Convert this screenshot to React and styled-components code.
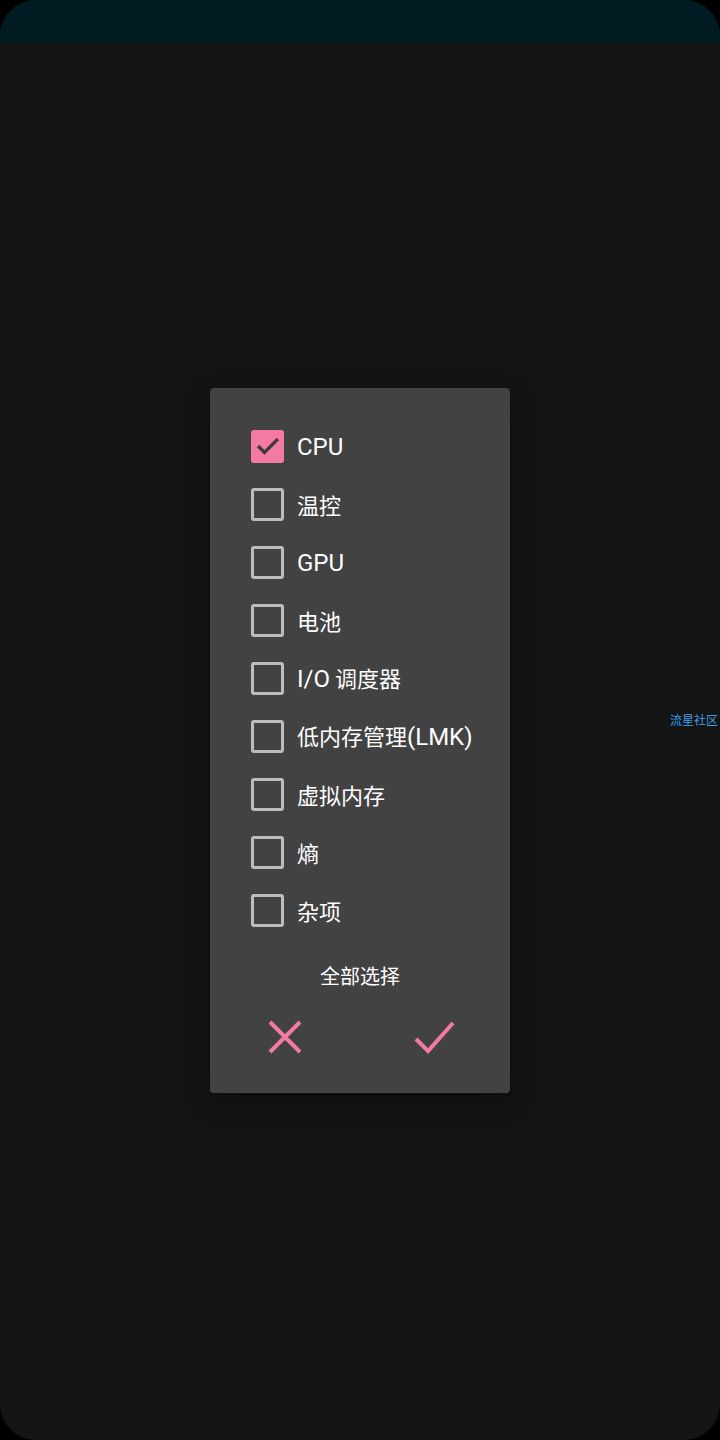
import React from "react";
import styled, { createGlobalStyle } from "styled-components";

const Global = createGlobalStyle`
  html, body {
    margin: 0;
    padding: 0;
    background: #000;
  }
  body {
    font-family: Roboto, "Noto Sans CJK SC", sans-serif;
  }
`;

const Screen = styled.div`
  width: 720px;
  height: 1440px;
  border-radius: 36px;
  overflow: hidden;
  background: #141414;
  display: flex;
  flex-direction: column;
  position: relative;
`;

const StatusBar = styled.div`
  height: 43px;
  background: #011b22;
  flex-shrink: 0;
`;

const Body = styled.div`
  flex: 1;
  display: flex;
  align-items: flex-start;
  justify-content: center;
  padding-top: 345px;
`;

const Dialog = styled.div`
  width: 300px;
  background: #424242;
  border-radius: 4px;
  box-shadow: 0 8px 24px rgba(0, 0, 0, 0.45);
  padding: 29px 0 0;
  box-sizing: border-box;
  height: 705px;
  display: flex;
  flex-direction: column;
`;

const Row = styled.label`
  height: 58px;
  display: flex;
  align-items: center;
  padding-left: 41px;
  gap: 13px;
  color: #fff;
  font-size: 22px;
`;

const Label = styled.span`
  line-height: 30px;
  font-family: "Noto Sans CJK SC", sans-serif;
`;

const Latin = styled.span`
  font-family: Roboto, sans-serif;
  font-size: 24px;
`;

const Box = styled.span`
  width: 33px;
  height: 33px;
  box-sizing: border-box;
  border-radius: 3px;
  border: ${p => (p.checked ? "none" : "3px solid #bdbdbd")};
  background: ${p => (p.checked ? "#f57aa3" : "transparent")};
  display: flex;
  align-items: center;
  justify-content: center;
  flex-shrink: 0;
`;

const SelectAll = styled.div`
  margin-top: 22px;
  text-align: center;
  color: #fff;
  font-size: 20px;
  line-height: 30px;
  font-family: "Noto Sans CJK SC", sans-serif;
`;

const Actions = styled.div`
  display: flex;
  justify-content: space-between;
  padding: 0 53px 0 53px;
  margin-top: 24px;
`;

const IconButton = styled.span`
  width: 44px;
  height: 44px;
  display: flex;
  align-items: center;
  justify-content: center;
`;

const Watermark = styled.div`
  position: absolute;
  left: 670px;
  top: 711px;
  font-size: 12px;
  color: #3a9fe6;
  font-family: "Noto Sans CJK SC", sans-serif;
  white-space: nowrap;
`;

const items = [
  { label: "CPU", checked: true },
  { label: "温控" },
  { label: "GPU" },
  { label: "电池" },
  { label: "I/O 调度器" },
  { label: "低内存管理(LMK)" },
  { label: "虚拟内存" },
  { label: "熵" },
  { label: "杂项" },
];

// latin runs render a touch bigger than the CJK glyphs
const renderLabel = text =>
  text.split(/([A-Za-z()/]+)/).map((part, i) =>
    /[A-Za-z()/]/.test(part) ? <Latin key={i}>{part}</Latin> : part
  );

const Tick = () => (
  <svg width="28" height="28" viewBox="0 0 24 24">
    <path d="M3.5 12l5.5 5.5L20.5 6" fill="none" stroke="#3f3a3c" strokeWidth="2.8" />
  </svg>
);

export default function App() {
  return (
    <>
      <Global />
      <Screen>
        <StatusBar />
        <Body>
          <Dialog>
            {items.map(item => (
              <Row key={item.label}>
                <Box checked={item.checked}>{item.checked && <Tick />}</Box>
                <Label>{renderLabel(item.label)}</Label>
              </Row>
            ))}
            <SelectAll>全部选择</SelectAll>
            <Actions>
              <IconButton>
                <svg width="34" height="34" viewBox="0 0 34 34">
                  <path d="M2 2L32 32M32 2L2 32" stroke="#f57aa3" strokeWidth="4" fill="none" />
                </svg>
              </IconButton>
              <IconButton>
                <svg width="42" height="34" viewBox="0 0 42 34">
                  <path d="M2 19l12 12L39 3" stroke="#f57aa3" strokeWidth="4" fill="none" />
                </svg>
              </IconButton>
            </Actions>
          </Dialog>
        </Body>
        <Watermark>流星社区</Watermark>
      </Screen>
    </>
  );
}
